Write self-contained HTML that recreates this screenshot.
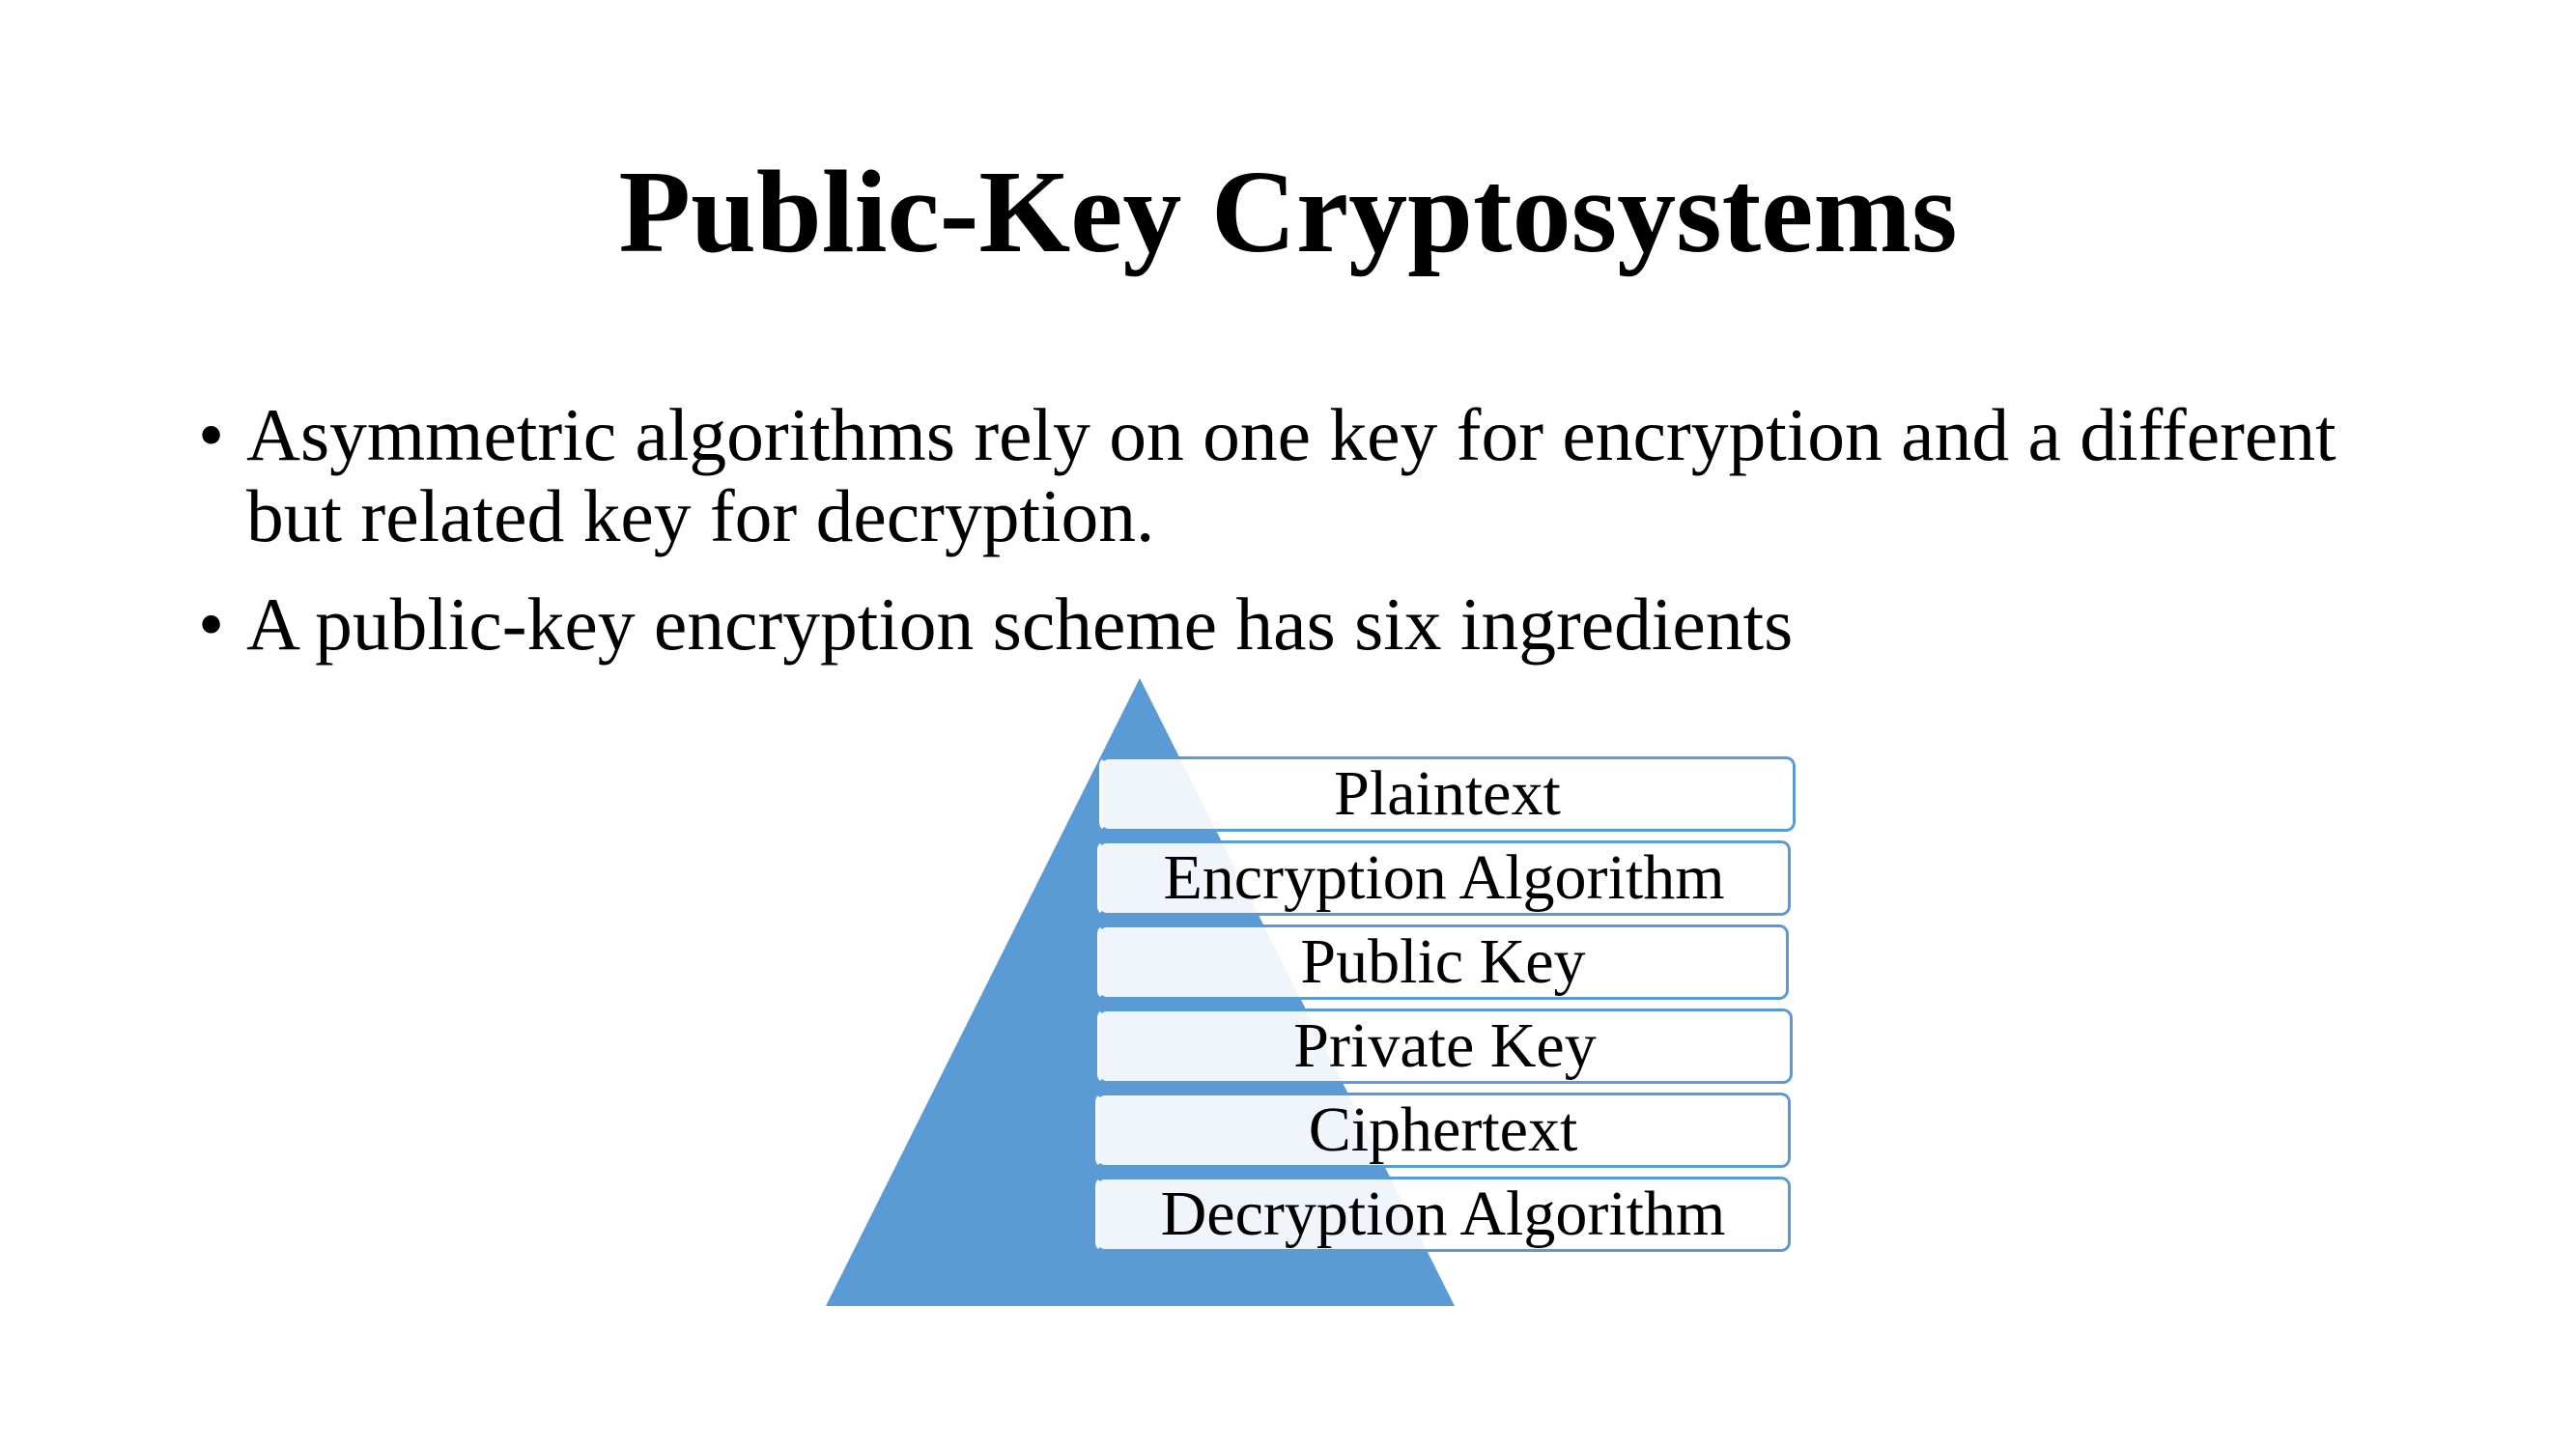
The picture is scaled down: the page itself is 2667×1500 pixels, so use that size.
<!DOCTYPE html>
<html><head><meta charset="utf-8"><style>
html,body{margin:0;padding:0;background:#fff}
body{width:2667px;height:1500px;position:relative;overflow:hidden;font-family:"Liberation Serif",serif;color:#000}
.title{position:absolute;left:0;width:2667px;top:150px;text-align:center;font-weight:bold;font-size:122px;line-height:140px}
.b{position:absolute;left:205px;font-size:77.5px;line-height:84px;white-space:nowrap}
.b span.d{position:absolute;left:0}
.b .t{position:absolute;left:50px}
.box{position:absolute;height:72px;background:rgba(255,255,255,0.9);border:3px solid #5B9BD5;border-left-color:rgba(255,255,255,0.5);border-radius:10px;text-align:center;font-size:66px;line-height:72px;box-sizing:content-box}
</style></head><body>
<div class="title">Public-Key Cryptosystems</div>
<div class="b" style="top:408px"><span class="d">•</span><span class="t">Asymmetric algorithms rely on one key for encryption and a different<br>but related key for decryption.</span></div>
<div class="b" style="top:604px"><span class="d">•</span><span class="t">A public-key encryption scheme has six ingredients</span></div>
<svg style="position:absolute;left:0;top:0" width="2667" height="1500"><polygon points="1180,702 855,1352 1506,1352" fill="#5B9BD5"/></svg>
<div class="box" style="left:1138px;top:783px;width:715px">Plaintext</div>
<div class="box" style="left:1136px;top:870px;width:712px">Encryption Algorithm</div>
<div class="box" style="left:1136px;top:957px;width:710px">Public Key</div>
<div class="box" style="left:1136px;top:1044px;width:714px">Private Key</div>
<div class="box" style="left:1134px;top:1131px;width:714px">Ciphertext</div>
<div class="box" style="left:1134px;top:1218px;width:714px">Decryption Algorithm</div>
</body></html>
